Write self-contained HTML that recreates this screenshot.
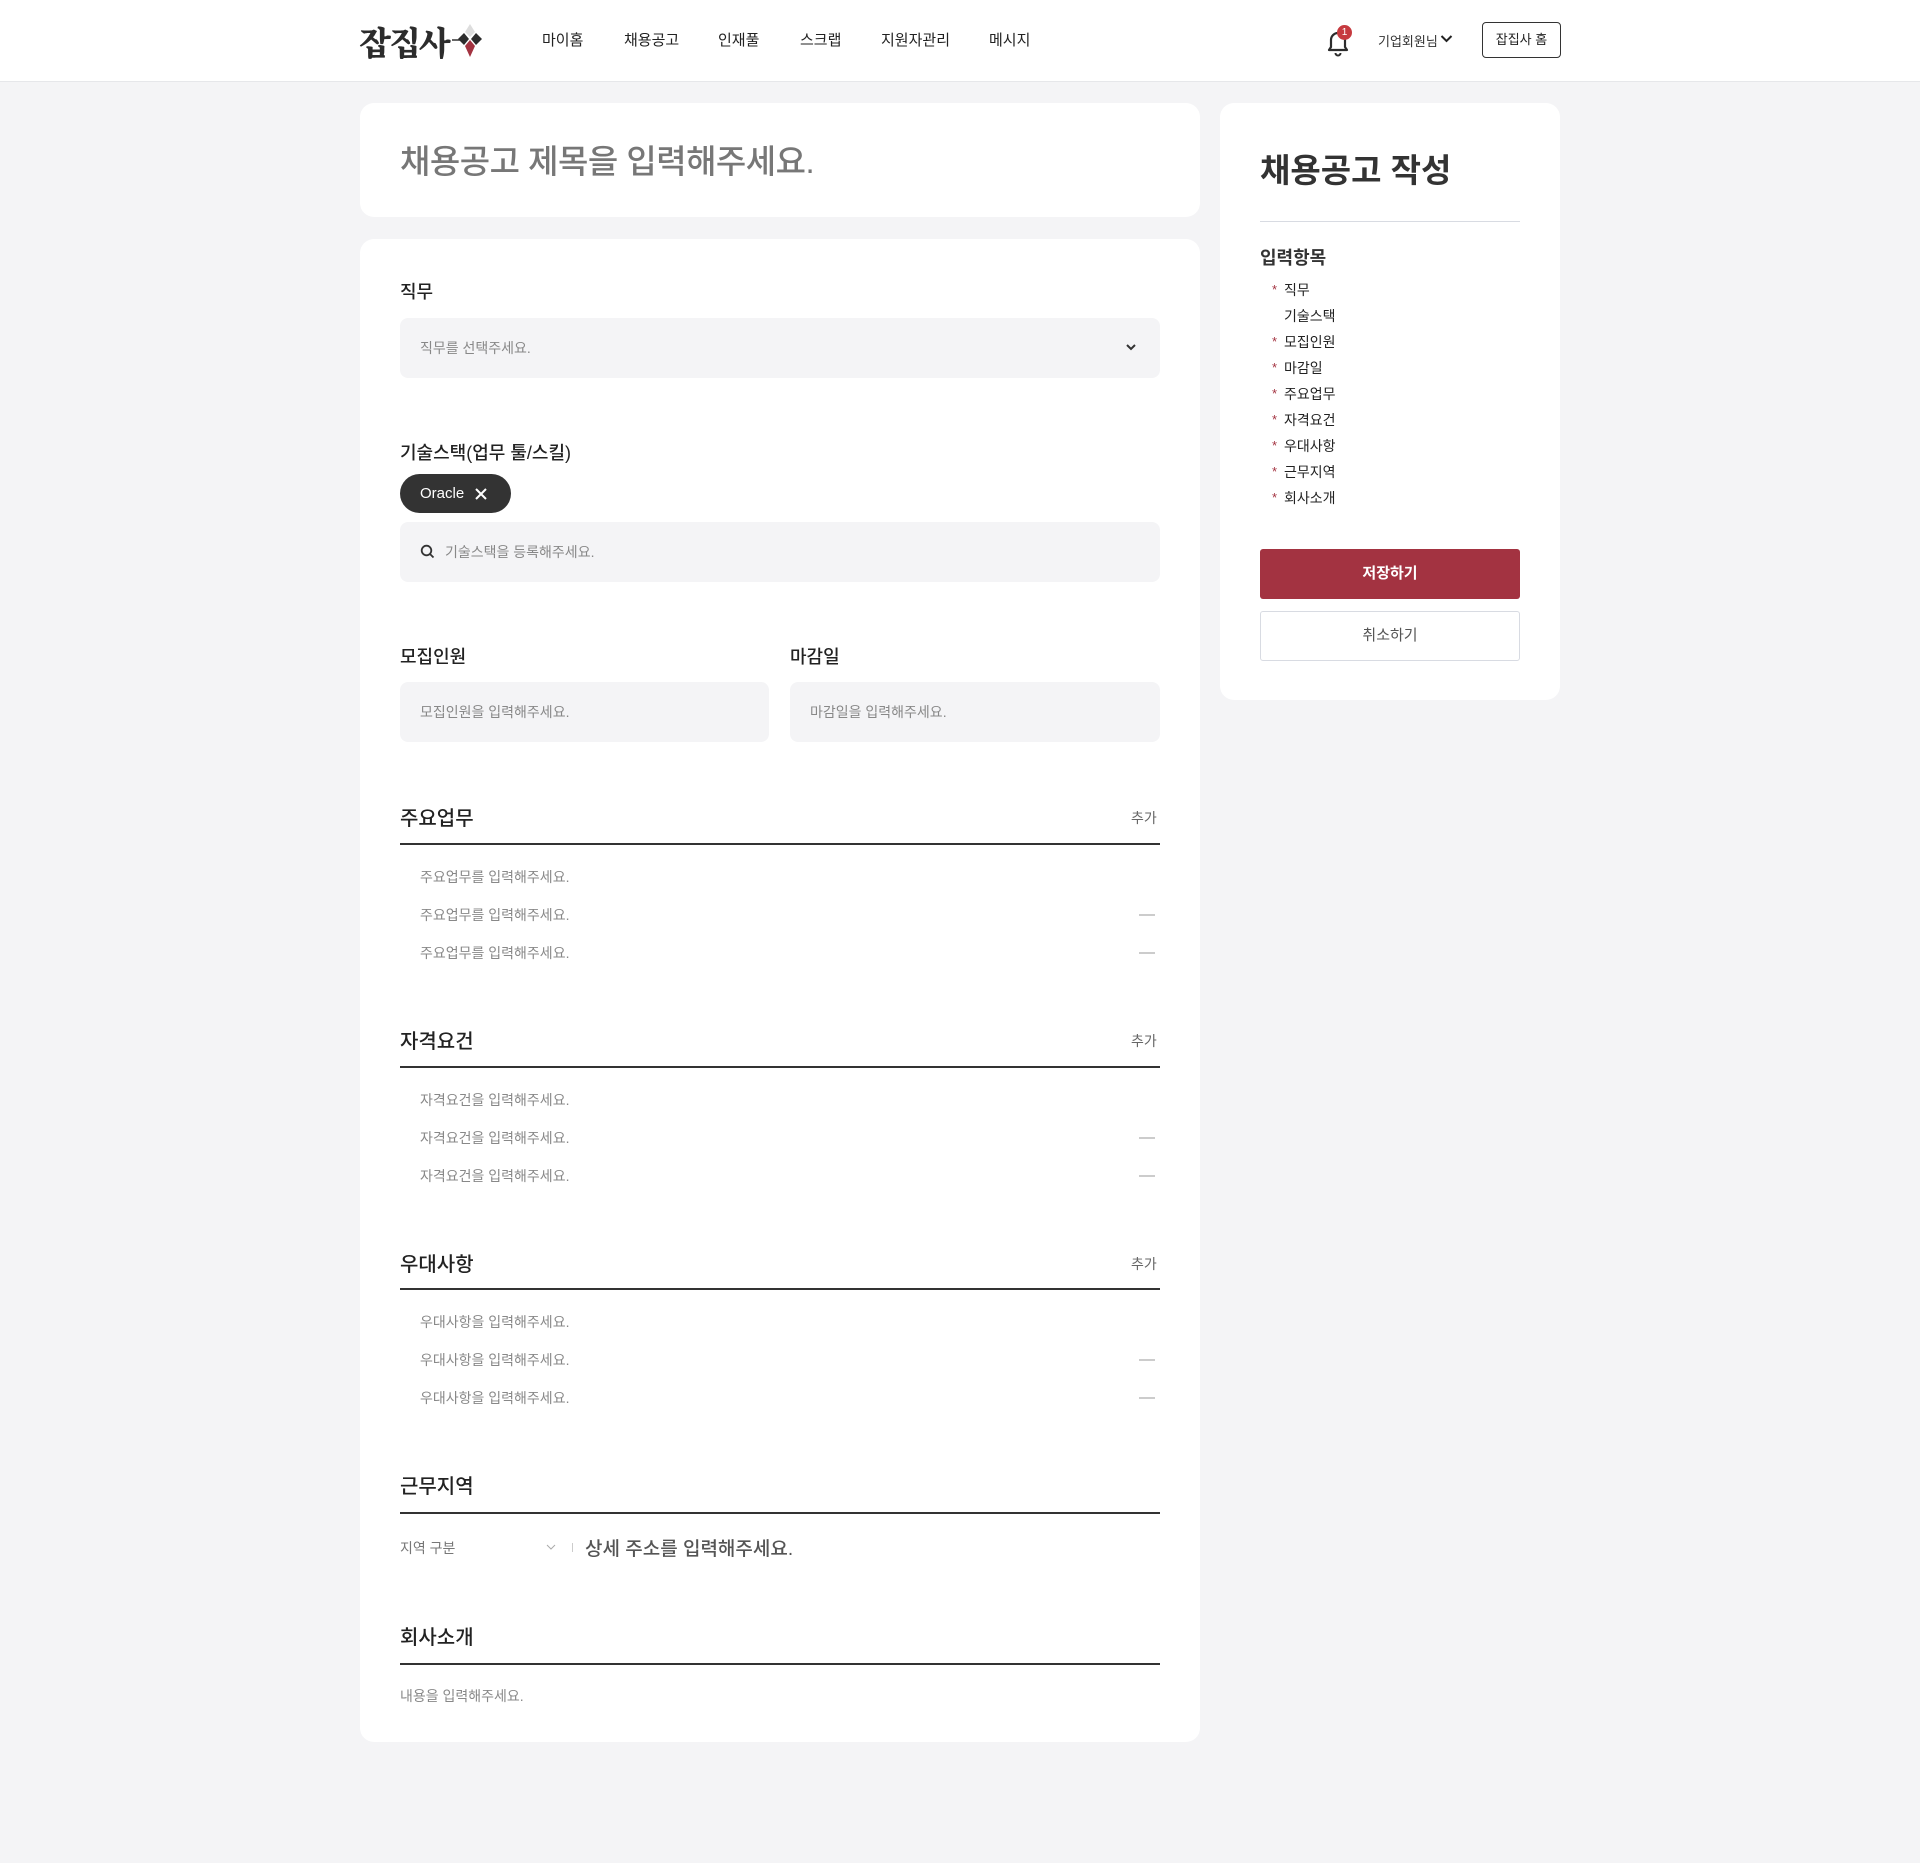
<!DOCTYPE html>
<html lang="ko"><head><meta charset="utf-8">
<style>
*{box-sizing:border-box;margin:0;padding:0}
html,body{width:1920px;height:1863px;background:#f4f4f6;font-family:"Liberation Sans","Noto Sans CJK KR",sans-serif;color:#222;position:relative;overflow:hidden}
.a{position:absolute;white-space:nowrap}
.hdr{position:absolute;left:0;top:0;width:1920px;height:82px;background:#fff;border-bottom:1px solid #e6e7ea}
.nav{font-size:15px;color:#222;top:29px}
.card{position:absolute;background:#fff;border-radius:14px}
.lbl{font-size:18px;color:#222;font-weight:500}
.inp{position:absolute;background:#f4f4f6;border-radius:8px;height:60px}
.ph{font-size:14px;color:#888}
.sec{font-size:20px;color:#222;font-weight:500}
.line{position:absolute;left:400px;width:760px;height:2px;background:#333}
.add{font-size:14px;color:#666}
.minus{position:absolute;left:1139px;width:16px;height:2px;background:#ccc}
.si{position:absolute;left:1284px;font-size:14px;color:#222}
.st{position:absolute;left:1272px;font-size:13px;color:#a33341}
</style></head><body>
<div class="hdr">
  <div class="a" style="left:359px;top:18px;font-size:33px;font-weight:900;letter-spacing:-2px;color:#2c2c2c;font-family:'Noto Serif CJK SC','Noto Sans CJK KR',serif">잡집사</div>
  <svg class="a" style="left:448px;top:22px" width="40" height="36" viewBox="0 0 40 36">
    <line x1="4" y1="18" x2="12" y2="18" stroke="#333" stroke-width="1.5"/>
    <polygon points="22,2 27,10 22,15 17,10" fill="#ddd"/>
    <polygon points="16,11 21,17 16,23 10,17" fill="#2c2c2c"/>
    <polygon points="28,11 34,17 28,23 23,17" fill="#2c2c2c"/>
    <polygon points="22,18 27,24 22,35 17,24" fill="#a33341"/>
  </svg>
  <div class="a nav" style="left:542px">마이홈</div>
  <div class="a nav" style="left:624px">채용공고</div>
  <div class="a nav" style="left:718px">인재풀</div>
  <div class="a nav" style="left:800px">스크랩</div>
  <div class="a nav" style="left:881px">지원자관리</div>
  <div class="a nav" style="left:989px">메시지</div>
  <svg class="a" style="left:1323px;top:28px" width="30" height="30" viewBox="0 0 30 30">
    <path d="M6 22 L8 19 L8 12 A7 7 0 0 1 22 12 L22 19 L24 22 Z" fill="none" stroke="#2c2c2c" stroke-width="2.2" stroke-linejoin="round"/>
    <path d="M12.5 25 A2.5 2.5 0 0 0 17.5 25" fill="none" stroke="#2c2c2c" stroke-width="2"/>
  </svg>
  <div class="a" style="left:1337px;top:25px;width:15px;height:15px;border-radius:50%;background:#c63a3f;color:#fff;font-size:10px;text-align:center;line-height:15px">1</div>
  <div class="a" style="left:1378px;top:31px;font-size:13px;color:#333">기업회원님</div>
  <svg class="a" style="left:1440px;top:34px" width="13" height="10" viewBox="0 0 13 10"><path d="M1.5 2 L6.5 7 L11.5 2" fill="none" stroke="#222" stroke-width="2"/></svg>
  <div class="a" style="left:1482px;top:22px;width:79px;height:36px;border:1.5px solid #333;border-radius:4px;font-size:13px;color:#222;text-align:center;line-height:33px">잡집사 홈</div>
</div>

<div class="card" style="left:360px;top:103px;width:840px;height:114px"></div>
<div class="a" style="left:400px;top:135px;font-size:33px;color:#777;font-weight:500;letter-spacing:-0.5px">채용공고 제목을 입력해주세요.</div>

<div class="card" style="left:360px;top:239px;width:840px;height:1503px"></div>
<div class="a lbl" style="left:400px;top:278px">직무</div>
<div class="inp" style="left:400px;top:318px;width:760px"></div>
<div class="a ph" style="left:420px;top:338px">직무를 선택주세요.</div>
<svg class="a" style="left:1125px;top:343px" width="12" height="9" viewBox="0 0 12 9"><path d="M2 2 L6 6 L10 2" fill="none" stroke="#333" stroke-width="2"/></svg>

<div class="a lbl" style="left:400px;top:439px">기술스택(업무 툴/스킬)</div>
<div class="a" style="left:400px;top:474px;width:111px;height:39px;border-radius:20px;background:#333;color:#fff;font-size:15px;line-height:39px;padding-left:20px;font-weight:500">Oracle</div>
<svg class="a" style="left:474px;top:487px" width="14" height="14" viewBox="0 0 14 14"><path d="M2 2 L12 12 M12 2 L2 12" stroke="#fff" stroke-width="2"/></svg>
<div class="inp" style="left:400px;top:522px;width:760px"></div>
<svg class="a" style="left:420px;top:544px" width="15" height="15" viewBox="0 0 15 15"><circle cx="6.5" cy="6.5" r="4.8" fill="none" stroke="#333" stroke-width="1.8"/><path d="M10 10 L13.5 13.5" stroke="#333" stroke-width="1.8"/></svg>
<div class="a ph" style="left:445px;top:542px">기술스택을 등록해주세요.</div>

<div class="a lbl" style="left:400px;top:643px">모집인원</div>
<div class="a lbl" style="left:790px;top:643px">마감일</div>
<div class="inp" style="left:400px;top:682px;width:369px"></div>
<div class="inp" style="left:790px;top:682px;width:370px"></div>
<div class="a ph" style="left:420px;top:702px">모집인원을 입력해주세요.</div>
<div class="a ph" style="left:810px;top:702px">마감일을 입력해주세요.</div>

<div class="a sec" style="left:400px;top:802px">주요업무</div>
<div class="a add" style="left:1131px;top:808px">추가</div>
<div class="line" style="top:843px"></div>
<div class="a ph" style="left:420px;top:867px">주요업무를 입력해주세요.</div>
<div class="a ph" style="left:420px;top:905px">주요업무를 입력해주세요.</div>
<div class="a ph" style="left:420px;top:943px">주요업무를 입력해주세요.</div>
<div class="minus" style="top:914px"></div><div class="minus" style="top:952px"></div>

<div class="a sec" style="left:400px;top:1025px">자격요건</div>
<div class="a add" style="left:1131px;top:1031px">추가</div>
<div class="line" style="top:1066px"></div>
<div class="a ph" style="left:420px;top:1090px">자격요건을 입력해주세요.</div>
<div class="a ph" style="left:420px;top:1128px">자격요건을 입력해주세요.</div>
<div class="a ph" style="left:420px;top:1166px">자격요건을 입력해주세요.</div>
<div class="minus" style="top:1137px"></div><div class="minus" style="top:1175px"></div>

<div class="a sec" style="left:400px;top:1248px">우대사항</div>
<div class="a add" style="left:1131px;top:1254px">추가</div>
<div class="line" style="top:1288px"></div>
<div class="a ph" style="left:420px;top:1312px">우대사항을 입력해주세요.</div>
<div class="a ph" style="left:420px;top:1350px">우대사항을 입력해주세요.</div>
<div class="a ph" style="left:420px;top:1388px">우대사항을 입력해주세요.</div>
<div class="minus" style="top:1359px"></div><div class="minus" style="top:1397px"></div>

<div class="a sec" style="left:400px;top:1470px">근무지역</div>
<div class="line" style="top:1512px"></div>
<div class="a ph" style="left:400px;top:1538px;color:#777">지역 구분</div>
<svg class="a" style="left:546px;top:1544px" width="10" height="7" viewBox="0 0 10 7"><path d="M1 1 L5 5 L9 1" fill="none" stroke="#aaa" stroke-width="1"/></svg>
<div class="a" style="left:572px;top:1543px;width:1px;height:9px;background:#ccc"></div>
<div class="a" style="left:585px;top:1534px;font-size:19px;color:#555;font-weight:500">상세 주소를 입력해주세요.</div>

<div class="a sec" style="left:400px;top:1621px">회사소개</div>
<div class="line" style="top:1663px"></div>
<div class="a ph" style="left:400px;top:1686px">내용을 입력해주세요.</div>

<div class="card" style="left:1220px;top:103px;width:340px;height:597px"></div>
<div class="a" style="left:1260px;top:144px;font-size:33px;font-weight:700;color:#333">채용공고 작성</div>
<div class="a" style="left:1260px;top:221px;width:260px;height:1px;background:#d8dbe2"></div>
<div class="a" style="left:1260px;top:244px;font-size:18px;font-weight:700;color:#333">입력항목</div>
<div class="st" style="top:282px">*</div><div class="si" style="top:280px">직무</div>
<div class="si" style="top:306px">기술스택</div>
<div class="st" style="top:334px">*</div><div class="si" style="top:332px">모집인원</div>
<div class="st" style="top:360px">*</div><div class="si" style="top:358px">마감일</div>
<div class="st" style="top:386px">*</div><div class="si" style="top:384px">주요업무</div>
<div class="st" style="top:412px">*</div><div class="si" style="top:410px">자격요건</div>
<div class="st" style="top:438px">*</div><div class="si" style="top:436px">우대사항</div>
<div class="st" style="top:464px">*</div><div class="si" style="top:462px">근무지역</div>
<div class="st" style="top:490px">*</div><div class="si" style="top:488px">회사소개</div>
<div class="a" style="left:1260px;top:549px;width:260px;height:50px;background:#a33341;border-radius:3px;color:#fff;font-size:15px;font-weight:700;text-align:center;line-height:50px">저장하기</div>
<div class="a" style="left:1260px;top:611px;width:260px;height:50px;border:1px solid #d8dbe2;border-radius:3px;color:#555;font-size:15px;text-align:center;line-height:48px">취소하기</div>
</body></html>
